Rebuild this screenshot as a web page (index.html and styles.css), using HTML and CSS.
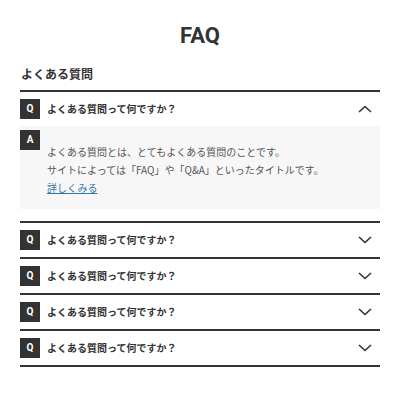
FILE: index.html
```html
<!DOCTYPE html>
<html lang="ja">
<head>
<meta charset="utf-8">
<title>FAQ</title>
<link rel="stylesheet" href="styles.css">
</head>
<body>
<main class="page">
  <h1 class="title">FAQ</h1>
  <h2 class="section-title">よくある質問</h2>
  <div class="faq">
    <div class="item open">
      <div class="question">
        <span class="mark">Q</span>
        <span class="q-text">よくある質問って何ですか？</span>
        <svg class="chev" width="14" height="8" viewBox="0 0 14 8"><polyline points="1,7 7,1.5 13,7" fill="none" stroke="#333" stroke-width="1.6"/></svg>
      </div>
      <div class="answer">
        <span class="mark mark-a">A</span>
        <div class="a-text">
          <p>よくある質問とは、とてもよくある質問のことです。</p>
          <p>サイトによっては「FAQ」や「Q&amp;A」といったタイトルです。</p>
          <p><a href="#" class="more">詳しくみる</a></p>
        </div>
      </div>
    </div>
    <div class="item">
      <div class="question">
        <span class="mark">Q</span>
        <span class="q-text">よくある質問って何ですか？</span>
        <svg class="chev" width="14" height="8" viewBox="0 0 14 8"><polyline points="1,1 7,6.5 13,1" fill="none" stroke="#333" stroke-width="1.6"/></svg>
      </div>
    </div>
    <div class="item">
      <div class="question">
        <span class="mark">Q</span>
        <span class="q-text">よくある質問って何ですか？</span>
        <svg class="chev" width="14" height="8" viewBox="0 0 14 8"><polyline points="1,1 7,6.5 13,1" fill="none" stroke="#333" stroke-width="1.6"/></svg>
      </div>
    </div>
    <div class="item">
      <div class="question">
        <span class="mark">Q</span>
        <span class="q-text">よくある質問って何ですか？</span>
        <svg class="chev" width="14" height="8" viewBox="0 0 14 8"><polyline points="1,1 7,6.5 13,1" fill="none" stroke="#333" stroke-width="1.6"/></svg>
      </div>
    </div>
    <div class="item">
      <div class="question">
        <span class="mark">Q</span>
        <span class="q-text">よくある質問って何ですか？</span>
        <svg class="chev" width="14" height="8" viewBox="0 0 14 8"><polyline points="1,1 7,6.5 13,1" fill="none" stroke="#333" stroke-width="1.6"/></svg>
      </div>
    </div>
  </div>
</main>
</body>
</html>
```
FILE: styles.css
```css
* { box-sizing: border-box; }
html, body { margin: 0; padding: 0; background: #fff; }
body {
  font-family: "Noto Sans CJK JP", "Noto Sans", sans-serif;
  color: #333;
}
.page {
  padding: 24px 20px 0;
}
.title {
  margin: 0;
  font-family: Roboto, "Noto Sans CJK JP", sans-serif;
  font-weight: 700;
  font-size: 22px;
  line-height: 24px;
  text-align: center;
  color: #333;
}
.section-title {
  margin: 17px 0 0;
  font-size: 12px;
  line-height: 18px;
  font-weight: 700;
  color: #333;
  padding-left: 1px;
}
.faq {
  margin-top: 7px;
  border-bottom: 2px solid #333;
}
.item {
  border-top: 2px solid #333;
}
.question {
  display: flex;
  align-items: center;
  height: 34px;
  padding-right: 8px;
}
.mark {
  flex: none;
  width: 20px;
  height: 20px;
  background: #333;
  color: #fff;
  font-family: Roboto, sans-serif;
  font-weight: 700;
  font-size: 10px;
  line-height: 20px;
  text-align: center;
}
.q-text {
  flex: 1;
  margin-left: 7px;
  font-size: 10px;
  font-weight: 700;
  line-height: 20px;
  color: #333;
}
.chev { flex: none; display: block; }
.answer {
  display: flex;
  align-items: flex-start;
  background: #f7f7f7;
  padding: 4px 0 12px;
  margin-bottom: 12px;
}
.a-text {
  margin-left: 7px;
  padding-top: 13px;
  font-size: 10px;
  line-height: 18px;
  color: #555;
}
.a-text p { margin: 0; }
.more {
  color: #2f78ad;
  text-decoration: underline;
}
```
